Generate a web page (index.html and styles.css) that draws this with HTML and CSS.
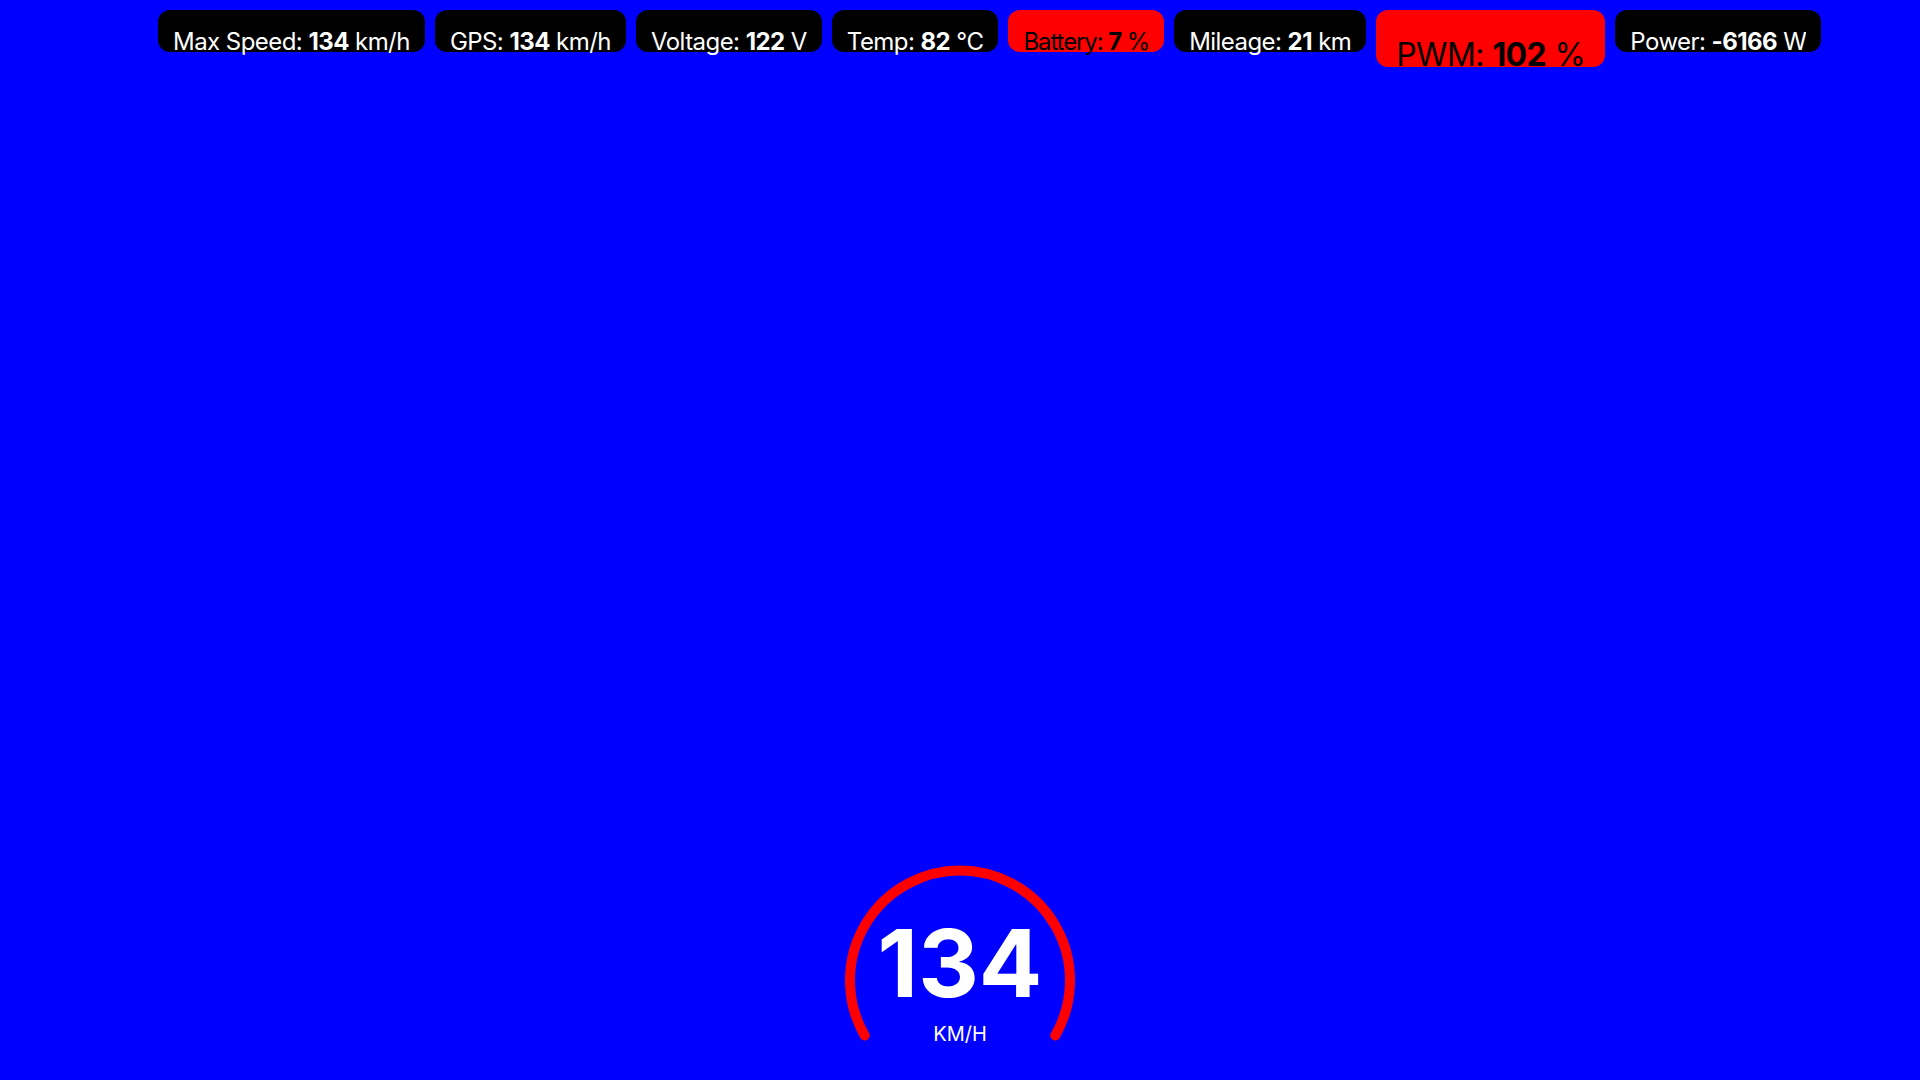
FILE: index.html
```html
<!DOCTYPE html>
<html lang="en">
<head>
<meta charset="utf-8">
<title>Dashboard</title>
<link rel="stylesheet" href="styles.css">
</head>
<body>
<div class="screen">
  <header class="stats">
    <div class="chip"><span class="label">Max Speed: <b>134</b> km/h</span></div>
    <div class="chip"><span class="label">GPS: <b>134</b> km/h</span></div>
    <div class="chip"><span class="label">Voltage: <b>122</b> V</span></div>
    <div class="chip"><span class="label">Temp: <b>82</b> °C</span></div>
    <div class="chip chip-alert chip-tight"><span class="label">Battery: <b>7</b> %</span></div>
    <div class="chip"><span class="label">Mileage: <b>21</b> km</span></div>
    <div class="chip chip-alert chip-big"><span class="label">PWM: <b>102</b> %</span></div>
    <div class="chip"><span class="label">Power: <b>-6166</b> W</span></div>
  </header>
  <main class="gauge">
    <svg class="gauge-arc" width="240" height="200" viewBox="0 0 240 200">
      <path d="M 24.7 175.5 A 110 110 0 1 1 215.3 175.5" fill="none" stroke="#ff0000" stroke-width="10" stroke-linecap="round"/>
    </svg>
    <div class="gauge-text">
      <div class="speed">134</div>
      <div class="unit">KM/H</div>
    </div>
  </main>
</div>
</body>
</html>
```
FILE: styles.css
```css
html, body {
  margin: 0;
  padding: 0;
  background: #0000ff;
}
.screen {
  height: 100vh;
  display: flex;
  flex-direction: column;
  font-family: Inter, "Noto Sans", sans-serif;
  color: #fff;
  overflow: hidden;
}
.stats {
  display: flex;
  align-items: flex-start;
  gap: 10px;
  padding: 10px 0 0 158px;
}
.chip {
  height: 42px;
  padding: 0 15px;
  background: #000;
  border-radius: 12px;
  font-size: 24px;
  letter-spacing: -0.55px;
  white-space: nowrap;
}
.chip .label {
  display: block;
  height: 45px;
  overflow: hidden;
  line-height: 29px;
  padding-top: 17px;
  box-sizing: border-box;
}
.chip b {
  font-weight: 700;
}
.chip-alert {
  background: #ff0000;
  color: #000;
}
.chip-tight {
  letter-spacing: -1.1px;
}
.chip-big {
  height: 57px;
  padding: 0 20px;
  font-size: 32px;
  letter-spacing: -0.6px;
}
.chip-big .label {
  height: 57px;
  line-height: 39px;
  padding-top: 25px;
}
.gauge {
  margin-top: auto;
  margin-bottom: 20px;
  align-self: center;
  display: grid;
  width: 240px;
  height: 200px;
}
.gauge-arc, .gauge-text {
  grid-area: 1 / 1;
}
.gauge-text {
  display: flex;
  flex-direction: column;
  align-items: center;
  padding-top: 55.8px;
}
.speed {
  font-size: 94px;
  font-weight: 700;
  line-height: 94px;
  letter-spacing: 0;
}
.unit {
  margin-top: 13.9px;
  font-size: 20px;
  line-height: 20px;
}
```
